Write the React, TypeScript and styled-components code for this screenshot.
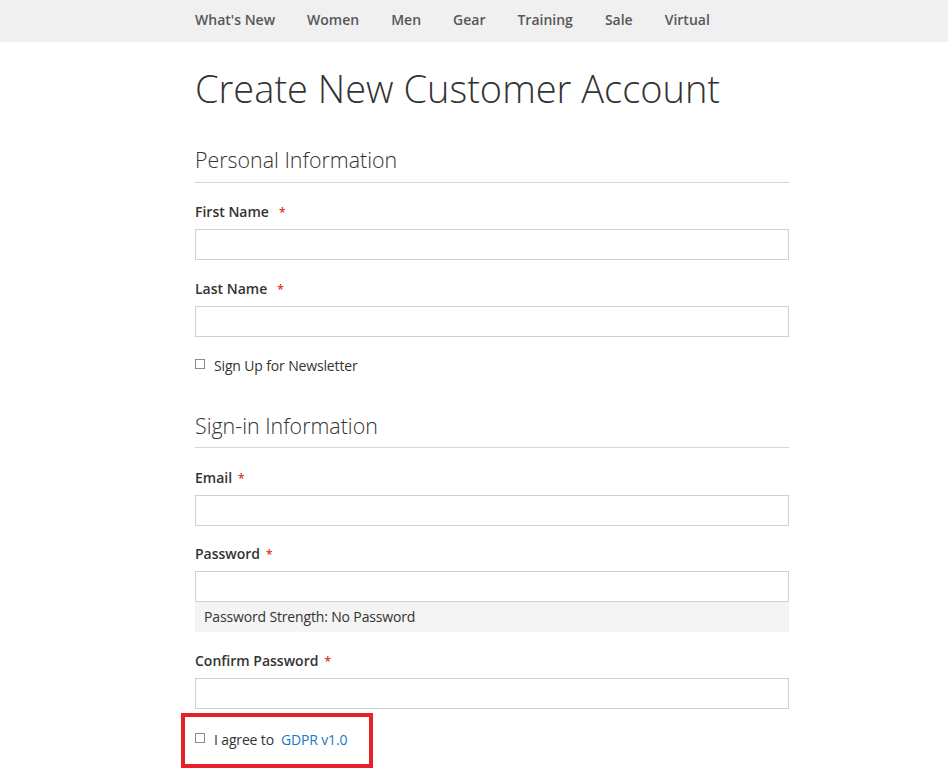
import React from "react";
import styled, { createGlobalStyle } from "styled-components";

const Global = createGlobalStyle`
  html, body { margin: 0; padding: 0; background: #fff; }
  body { font-family: "Open Sans", "Liberation Sans", sans-serif; color: #333; min-height: 782px; }
  * { box-sizing: border-box; }
`;

const NavBar = styled.nav`
  height: 42px;
  background: #f0f0f0;
  display: flex;
  align-items: center;
  gap: 32px;
  padding-left: 195px;
  padding-bottom: 3px;
`;

const NavItem = styled.a`
  font-size: 14px;
  font-weight: 600;
  color: #575757;
  text-decoration: none;
`;

const Main = styled.main`
  width: 594px;
  margin-left: 195px;
  padding-bottom: 33px;
  display: flex;
  flex-direction: column;
`;

const PageTitle = styled.h1`
  margin: 24px 0 0;
  font-size: 38px;
  font-weight: 300;
  line-height: 44px;
  color: #333;
`;

const Legend = styled.h2<{ $top: number; $pad: number }>`
  margin: ${(p) => p.$top}px 0 0;
  font-size: 21.4px;
  font-weight: 300;
  line-height: 28px;
  color: #333;
  padding-bottom: ${(p) => p.$pad}px;
  border-bottom: 1px solid #d6d6d6;
`;

const Field = styled.div<{ $top: number }>`
  margin-top: ${(p) => p.$top}px;
  display: flex;
  flex-direction: column;
`;

const Label = styled.label<{ $gap: number }>`
  font-size: 14px;
  font-weight: 600;
  line-height: 20px;
  color: #333;
  margin-bottom: 6px;
  &::after {
    content: "*";
    color: #e02b27;
    font-size: 12px;
    margin-left: ${(p) => p.$gap}px;
  }
`;

const Input = styled.input`
  height: 31px;
  width: 100%;
  border: 1px solid #d0d0d0;
  background: #fff;
  font-family: inherit;
  font-size: 14px;
  padding: 0 9px;
  outline: none;
`;

const Strength = styled.div`
  height: 30px;
  background: #f4f4f4;
  font-size: 14px;
  line-height: 30px;
  padding-left: 9px;
  color: #333;
  letter-spacing: -0.15px;
`;

const CheckRow = styled.div<{ $top: number }>`
  position: relative;
  margin-top: ${(p) => p.$top}px;
  display: flex;
  align-items: center;
  height: 20px;
  font-size: 14px;
  color: #333;
  letter-spacing: -0.15px;
`;

const Box = styled.span`
  width: 10px;
  height: 10px;
  border: 1px solid #8a8a8a;
  background: #fff;
  margin-right: 9px;
  margin-top: -2px;
  flex: none;
`;

const Link = styled.a`
  color: #1979c3;
  text-decoration: none;
  margin-left: 7px;
`;

const Highlight = styled.div`
  position: absolute;
  left: -14px;
  top: -16px;
  width: 192px;
  height: 55px;
  border: 4px solid #e8202a;
  pointer-events: none;
`;

const navItems = ["What's New", "Women", "Men", "Gear", "Training", "Sale", "Virtual"];

export default function App() {
  return (
    <>
      <Global />
      <NavBar>
        {navItems.map((n) => (
          <NavItem key={n} href="#">{n}</NavItem>
        ))}
      </NavBar>
      <Main>
        <PageTitle>Create New Customer Account</PageTitle>
        <Legend $top={36} $pad={8}>Personal Information</Legend>
        <Field $top={19}>
          <Label $gap={10}>First Name</Label>
          <Input type="text" />
        </Field>
        <Field $top={19}>
          <Label $gap={10}>Last Name</Label>
          <Input type="text" />
        </Field>
        <CheckRow $top={18}>
          <Box />
          Sign Up for Newsletter
        </CheckRow>
        <Legend $top={37} $pad={7}>Sign-in Information</Legend>
        <Field $top={20}>
          <Label $gap={6}>Email</Label>
          <Input type="email" />
        </Field>
        <Field $top={18}>
          <Label $gap={6}>Password</Label>
          <Input type="password" />
          <Strength>Password Strength: No Password</Strength>
        </Field>
        <Field $top={19}>
          <Label $gap={6}>Confirm Password</Label>
          <Input type="password" />
        </Field>
        <CheckRow $top={20}>
          <Box />
          I agree to
          <Link href="#">GDPR v1.0</Link>
          <Highlight />
        </CheckRow>
      </Main>
    </>
  );
}
